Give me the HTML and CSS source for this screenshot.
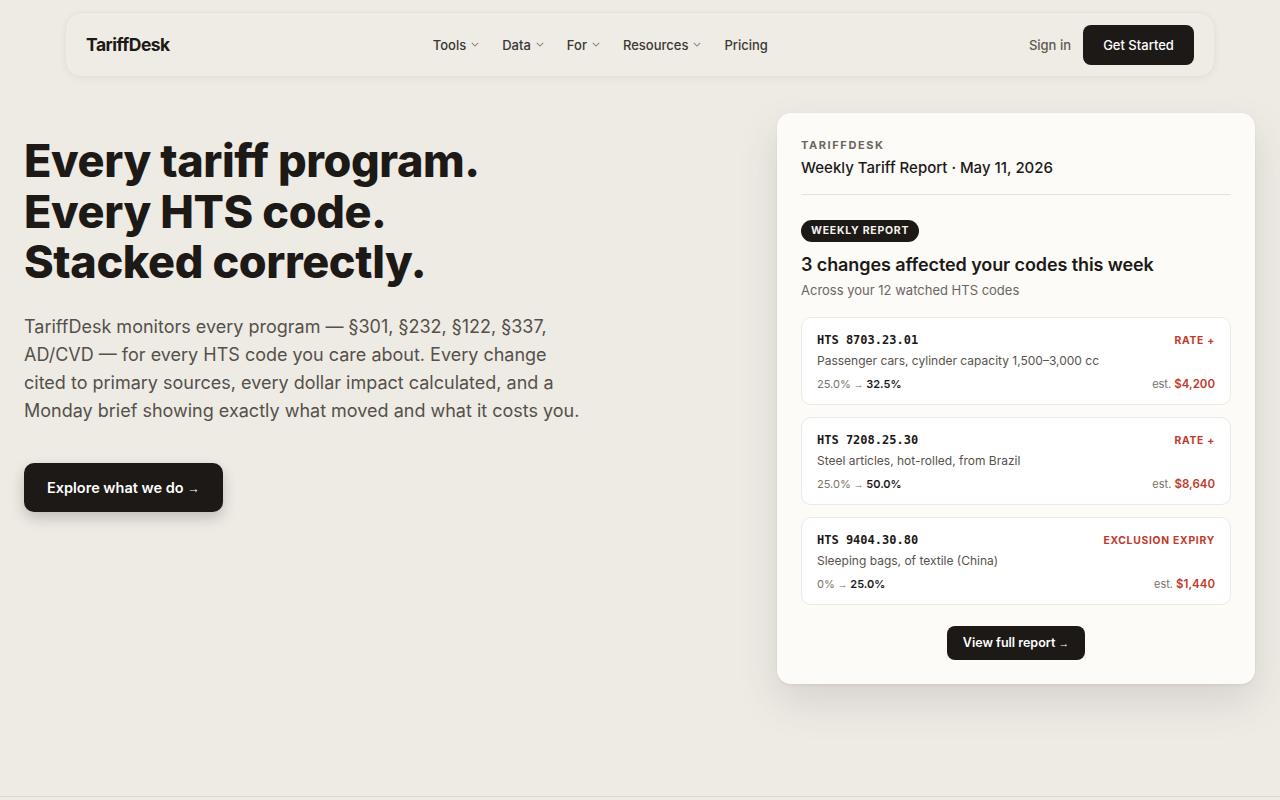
FILE: index.html
```html
<!DOCTYPE html>
<html lang="en">
<head>
    <meta charset="UTF-8">
    <meta name="viewport" content="width=device-width, initial-scale=1.0">
    <title>TariffDesk</title>
    <link rel="stylesheet" href="styles.css">
</head>
<body>
    <header class="nav">
        <a class="logo" href="#">TariffDesk</a>
        <nav class="menu">
            <a href="#">Tools <svg class="chev" viewBox="0 0 10 6"><path d="M1 1l4 4 4-4"/></svg></a>
            <a href="#">Data <svg class="chev" viewBox="0 0 10 6"><path d="M1 1l4 4 4-4"/></svg></a>
            <a href="#">For <svg class="chev" viewBox="0 0 10 6"><path d="M1 1l4 4 4-4"/></svg></a>
            <a href="#">Resources <svg class="chev" viewBox="0 0 10 6"><path d="M1 1l4 4 4-4"/></svg></a>
            <a href="#">Pricing</a>
        </nav>
        <div class="actions">
            <a class="signin" href="#">Sign in</a>
            <a class="btn-dark start" href="#">Get Started</a>
        </div>
    </header>

    <section class="hero">
        <div class="hero-text">
            <h1>Every tariff program.<br>Every HTS code.<br>Stacked correctly.</h1>
            <p class="lead">TariffDesk monitors every program — §301, §232, §122, §337, AD/CVD — for every HTS code you care about. Every change cited to primary sources, every dollar impact calculated, and a Monday brief showing exactly what moved and what it costs you.</p>
            <a class="btn-dark explore" href="#">Explore what we do <span class="arr">→</span></a>
        </div>

        <div class="report">
            <div class="report-brand">TARIFFDESK</div>
            <div class="report-title">Weekly Tariff Report · May 11, 2026</div>
            <div class="divider"></div>
            <span class="badge">WEEKLY REPORT</span>
            <h2>3 changes affected your codes this week</h2>
            <div class="sub">Across your 12 watched HTS codes</div>

            <div class="items">
                <div class="item">
                    <div class="row">
                        <span class="code">HTS 8703.23.01</span>
                        <span class="tag">RATE +</span>
                    </div>
                    <div class="desc">Passenger cars, cylinder capacity 1,500–3,000 cc</div>
                    <div class="row">
                        <span class="rate">25.0% <span class="arr">→</span> <b>32.5%</b></span>
                        <span class="est">est. <b>$4,200</b></span>
                    </div>
                </div>
                <div class="item">
                    <div class="row">
                        <span class="code">HTS 7208.25.30</span>
                        <span class="tag">RATE +</span>
                    </div>
                    <div class="desc">Steel articles, hot-rolled, from Brazil</div>
                    <div class="row">
                        <span class="rate">25.0% <span class="arr">→</span> <b>50.0%</b></span>
                        <span class="est">est. <b>$8,640</b></span>
                    </div>
                </div>
                <div class="item">
                    <div class="row">
                        <span class="code">HTS 9404.30.80</span>
                        <span class="tag">EXCLUSION EXPIRY</span>
                    </div>
                    <div class="desc">Sleeping bags, of textile (China)</div>
                    <div class="row">
                        <span class="rate">0% <span class="arr">→</span> <b>25.0%</b></span>
                        <span class="est">est. <b>$1,440</b></span>
                    </div>
                </div>
            </div>

            <div class="report-foot">
                <a class="btn-dark full" href="#">View full report <span class="arr">→</span></a>
            </div>
        </div>
    </section>
</body>
</html>
```

FILE: styles.css
```css
* {
  box-sizing: border-box;
}

body {
  margin: 0;
  background-color: #eeebe5;
  font-family: Inter, "Liberation Sans", sans-serif;
  color: #1c1917;
}

a {
  text-decoration: none;
  color: inherit;
}

/* small thin arrow, like the fallback glyph */
.arr {
  font-family: "Liberation Sans", sans-serif;
  font-weight: 400;
  font-size: 0.85em;
}

.nav {
  width: 1150px;
  height: 65px;
  margin: 12px auto 0;
  padding: 0 20px;
  display: flex;
  align-items: center;
  justify-content: space-between;
  background-color: #efece6;
  border: 1px solid #e6e2da;
  border-radius: 16px;
  box-shadow: 0 2px 6px rgba(60, 50, 40, 0.06);
}

.logo {
  font-size: 17.5px;
  font-weight: 700;
  letter-spacing: -0.5px;
  color: #1c1917;
}

.menu {
  display: flex;
  gap: 23px;
  margin-left: 2px;
}

.menu a {
  display: flex;
  align-items: center;
  gap: 5px;
  font-size: 13px;
  font-weight: 500;
  color: #3b3733;
}

.chev {
  width: 8px;
  height: 5px;
  fill: none;
  stroke: #8a857e;
  stroke-width: 1.3;
}

.actions {
  display: flex;
  align-items: center;
  gap: 12px;
}

.signin {
  font-size: 13px;
  font-weight: 500;
  color: #5e5952;
}

.btn-dark {
  display: inline-block;
  background-color: #1c1917;
  color: #fff;
  font-weight: 600;
}

.start {
  width: 111px;
  height: 40px;
  line-height: 40px;
  text-align: center;
  font-size: 13px;
  font-weight: 500;
  border-radius: 8px;
}

.hero {
  width: 1280px;
  height: 720px;
  margin: 0 auto;
  padding: 36px 25px 0 24px;
  display: flex;
  justify-content: space-between;
  align-items: flex-start;
  border-bottom: 1px solid #dcd7ce;
}

.hero-text {
  padding-top: 23px;
  width: 580px;
}

h1 {
  margin: 0;
  font-size: 45px;
  line-height: 50.5px;
  font-weight: 800;
  letter-spacing: -0.4px;
  color: #1c1917;
}

.lead {
  width: 562px;
  margin: 25px 0 0;
  font-size: 18px;
  line-height: 28.3px;
  color: #55504a;
}

.explore {
  margin-top: 37px;
  height: 49px;
  line-height: 49px;
  padding: 0 23px;
  font-size: 14.5px;
  border-radius: 10px;
  box-shadow: 0 6px 14px rgba(30, 25, 20, 0.22);
}

.report {
  width: 478px;
  padding: 25px 24px 24px;
  background-color: #fcfbf8;
  border-radius: 14px;
  box-shadow: 0 18px 40px rgba(60, 50, 40, 0.13), 0 1px 3px rgba(60, 50, 40, 0.08);
}

.report-brand {
  font-size: 11px;
  font-weight: 700;
  letter-spacing: 1.6px;
  color: #6b665f;
}

.report-title {
  margin-top: 6px;
  font-size: 15px;
  font-weight: 500;
}

.divider {
  height: 1px;
  background-color: #e6e2da;
  margin: 17px 0 23px;
}

.badge {
  display: inline-block;
  height: 22px;
  line-height: 22px;
  padding: 0 10px;
  border-radius: 11px;
  background-color: #1c1917;
  color: #f5f2ec;
  font-size: 10.5px;
  font-weight: 700;
  letter-spacing: 0.75px;
}

h2 {
  margin: 12px 0 0;
  font-size: 18px;
  font-weight: 600;
  letter-spacing: -0.1px;
}

.sub {
  margin-top: 7px;
  font-size: 13px;
  color: #6b665f;
}

.items {
  margin-top: 19px;
  display: flex;
  flex-direction: column;
  gap: 12px;
}

.item {
  height: 88px;
  padding: 15px 15px 0;
  background-color: #fff;
  border: 1px solid #ede9e2;
  border-radius: 10px;
}

.row {
  display: flex;
  justify-content: space-between;
  align-items: center;
}

.code {
  font-family: "DejaVu Sans Mono", "Liberation Mono", monospace;
  font-size: 12px;
  font-weight: 700;
  color: #1c1917;
}

.tag {
  font-size: 10.3px;
  font-weight: 700;
  letter-spacing: 0.75px;
  color: #c0392b;
}

.desc {
  margin: 6px 0 9px;
  font-size: 12px;
  color: #57524c;
}

.rate {
  font-size: 11px;
  color: #77726b;
}

.rate b {
  color: #1c1917;
  font-weight: 600;
}

.est {
  font-size: 11px;
  color: #77726b;
}

.est b {
  color: #c0392b;
  font-weight: 600;
  font-size: 11.5px;
}

.report-foot {
  margin-top: 21px;
  text-align: center;
}

.full {
  height: 34px;
  line-height: 34px;
  padding: 0 16px;
  font-size: 12.5px;
  border-radius: 8px;
}
```
